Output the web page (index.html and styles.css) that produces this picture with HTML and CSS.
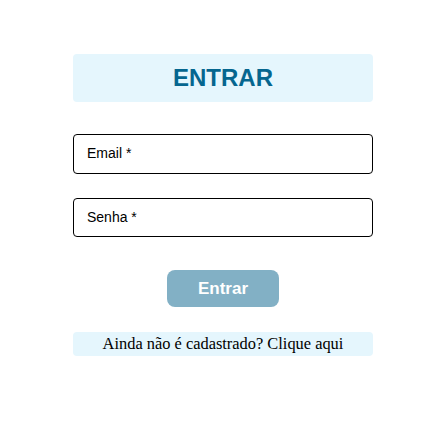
FILE: index.html
```html
<!DOCTYPE html>
<html lang="pt">
<head>
<meta charset="utf-8">
<link rel="stylesheet" href="styles.css">
</head>
<body>
<main class="login">
  <h1 class="title">ENTRAR</h1>
  <form class="form">
    <label class="field"><span class="label">Email *</span></label>
    <label class="field"><span class="label">Senha *</span></label>
    <button type="button" class="submit">Entrar</button>
  </form>
  <p class="signup">Ainda não é cadastrado? Clique aqui</p>
</main>
</body>
</html>
```

FILE: styles.css
```css
html, body {
  margin: 0;
  padding: 0;
  background: #ffffff;
}
.login {
  width: 300px;
  margin: 0 0 0 73px;
  padding-top: 54px;
  display: flex;
  flex-direction: column;
}
.title {
  margin: 0;
  height: 48px;
  background: #e5f6fd;
  border-radius: 4px;
  color: #05668f;
  font-family: "Liberation Sans", Arial, sans-serif;
  font-weight: bold;
  font-size: 24px;
  display: flex;
  align-items: center;
  justify-content: center;
}
.form {
  margin-top: 32px;
  display: flex;
  flex-direction: column;
  gap: 24px;
}
.field {
  box-sizing: border-box;
  height: 40px;
  border: 1px solid #000;
  border-radius: 4px;
  display: flex;
  align-items: center;
  padding-left: 13px;
  padding-bottom: 2px;
}
.field + .field {
  height: 39px;
}
.label {
  font-family: "Liberation Sans", Arial, sans-serif;
  font-size: 14px;
  color: #000;
}
.submit {
  align-self: center;
  margin-top: 9px;
  width: 112px;
  height: 37px;
  border: none;
  border-radius: 8px;
  background: #82b0c5;
  color: #fff;
  font-family: "Liberation Sans", Arial, sans-serif;
  font-weight: bold;
  font-size: 17px;
  padding: 0;
}
.signup {
  margin: 25px 0 0;
  height: 24px;
  background: #e5f6fd;
  border-radius: 4px;
  font-family: "Liberation Serif", "Times New Roman", serif;
  font-size: 16.4px;
  line-height: 24px;
  text-align: center;
  color: #000;
}
```
